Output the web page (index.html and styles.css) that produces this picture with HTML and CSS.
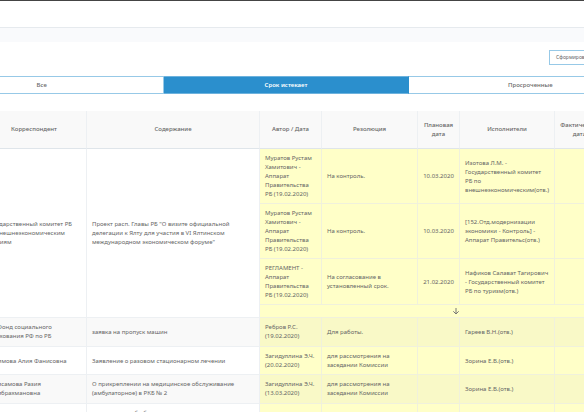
FILE: index.html
```html
<!DOCTYPE html>
<html lang="ru">
<head>
<meta charset="utf-8">
<title>Срок истекает</title>
<link rel="stylesheet" href="styles.css">
</head>
<body>
<header class="topbar"></header>
<div class="subbar"></div>
<main class="content">
  <div class="actions"><button class="report" type="button">Сформировать отчет</button></div>
  <nav class="tabs">
    <button class="tab" type="button">Все</button>
    <button class="tab active" type="button">Срок истекает</button>
    <button class="tab" type="button">Просроченные</button>
  </nav>
  <table class="docs">
    <colgroup>
      <col class="c-from"><col class="c-text"><col class="c-author"><col class="c-res"><col class="c-date"><col class="c-exec"><col class="c-fact"><col>
    </colgroup>
    <thead>
      <tr><th>Корреспондент</th><th>Содержание</th><th>Автор / Дата</th><th>Резолюция</th><th>Плановая<br>дата</th><th>Исполнители</th><th>Фактическая<br>дата</th><th></th></tr>
    </thead>
    <tbody>
      <tr>
        <td rowspan="4">Государственный комитет РБ<br>по внешнеэкономическим<br>связиям</td>
        <td rowspan="4">Проект расп. Главы РБ "О визите официальной<br>делегации к Ялту для участия в VI Ялтинском<br>международном экономическом форуме"</td>
        <td class="due">Муратов Рустам<br>Хамитович -<br>Аппарат<br>Правительства<br>РБ (19.02.2020)</td>
        <td class="due">На контроль.</td><td class="due date">10.03.2020</td>
        <td class="due">Изотова Л.М. -<br>Государственный комитет<br>РБ по<br>внешнеэкономическим(отв.)</td><td class="due"></td><td class="due"></td>
      </tr>
      <tr>
        <td class="due">Муратов Рустам<br>Хамитович -<br>Аппарат<br>Правительства<br>РБ (19.02.2020)</td>
        <td class="due">На контроль.</td><td class="due date">10.03.2020</td>
        <td class="due">[152.Отд.модернизации<br>экономики - Контроль] -<br>Аппарат Правительс(отв.)</td><td class="due"></td><td class="due"></td>
      </tr>
      <tr>
        <td class="due">РЕГЛАМЕНТ -<br>Аппарат<br>Правительства<br>РБ (19.02.2020)</td>
        <td class="due">На согласование в<br>установленный срок.</td><td class="due date">21.02.2020</td>
        <td class="due">Нафиков Салават Тагирович<br>- Государственный комитет<br>РБ по туризм(отв.)</td><td class="due"></td><td class="due"></td>
      </tr>
      <tr>
        <td class="due more" colspan="6"><svg class="arrow" viewBox="0 0 8 8" aria-hidden="true"><path d="M4 1v6M1.3 4.3 4 7l2.7-2.7"/></svg></td>
      </tr>
      <tr class="odd">
        <td>ГУ- Фонд социального<br>страхования РФ по РБ</td><td>заявка на пропуск машин</td>
        <td class="due">Ребров Р.С.<br>(19.02.2020)</td><td class="due">Для работы.</td><td class="due"></td><td class="due">Гареев В.Н.(отв.)</td><td class="due"></td><td class="due"></td>
      </tr>
      <tr>
        <td>Салимова Алия Фанисовна</td><td>Заявление о разовом стационарном лечении</td>
        <td class="due">Загидуллина Э.Ч.<br>(20.02.2020)</td><td class="due">для рассмотрения на<br>заседании Комиссии</td><td class="due"></td><td class="due">Зорина Е.В.(отв.)</td><td class="due"></td><td class="due"></td>
      </tr>
      <tr class="odd">
        <td>Харисамова Разия<br>Хабибрахмановна</td><td>О прикреплении на медицинское обслуживание<br>(амбулаторное) в РКБ № 2</td>
        <td class="due">Загидуллина Э.Ч.<br>(13.03.2020)</td><td class="due">для рассмотрения на<br>заседании Комиссии</td><td class="due"></td><td class="due">Зорина Е.В.(отв.)</td><td class="due"></td><td class="due"></td>
      </tr>
      <tr>
        <td></td><td>по вопросам об обеспечении<br>лекарствами</td>
        <td class="due"></td><td class="due"></td><td class="due"></td><td class="due"></td><td class="due"></td><td class="due"></td>
      </tr>
    </tbody>
  </table>
</main>
</body>
</html>
```

FILE: styles.css
```css
* { box-sizing: border-box; }
html, body { height: 100%; }
body {
  margin: 0;
  overflow: hidden;
  background: #fff;
  color: #666;
  font: 6px/9px "Noto Sans", "Open Sans", sans-serif;
}
.topbar { height: 28px; border-top: 1px solid #444; border-bottom: 1px solid #e6eaee; }
.subbar { height: 14px; background: #f9fafc; }
/* The list is wider than the window on both sides */
.content { margin: 0 -69px 0 -80px; padding-top: 8px; }
.actions { display: flex; justify-content: flex-end; }
button { font: inherit; color: inherit; background: #fff; border: 1px solid #97c9e7; padding: 0; }
.report { width: 104px; height: 15px; padding-left: 6px; font-size: 5px; text-align: left; white-space: nowrap; }
.tabs { display: grid; grid-template-columns: repeat(3, 1fr); margin-top: 11px; }
.tab { height: 18px; font-weight: 500; border-left-width: 0; }
.tab.active { background: #2b8fcd; border-color: #6db2dd; border-right-color: #2b8fcd; color: #fff; font-weight: 600; }
.docs {
  width: calc(100% - 62px);
  margin: 17px 0 0 62px;
  table-layout: fixed;
  border-collapse: separate;
  border-spacing: 0;
}
.c-from { width: 105px; }
.c-text { width: 173px; }
.c-author { width: 62px; }
.c-res { width: 96px; }
.c-date { width: 42px; }
.c-exec { width: 95px; }
.c-fact { width: 50px; }
th, td { border-right: 1px solid #edf0f3; border-bottom: 1px solid #edf0f3; }
th { height: 38px; padding: 0 2px; background: #f9f9f9; border-bottom-color: #dfe5ea; font-weight: 500; }
td { padding: 5px 0 4px 5px; white-space: nowrap; }
.odd td { padding-bottom: 5px; background: #f9f9f9; }
.due, .odd .due { background: #ffffc8; border-color: #f0f1dc; }
.odd .due { background: #f9f9c7; }
.date { padding-left: 0; text-align: center; }
.more { height: 13px; padding: 0; text-align: center; line-height: 8px; }
.arrow { width: 8px; height: 8px; fill: none; stroke: #777; stroke-width: 1; vertical-align: top; }
```
